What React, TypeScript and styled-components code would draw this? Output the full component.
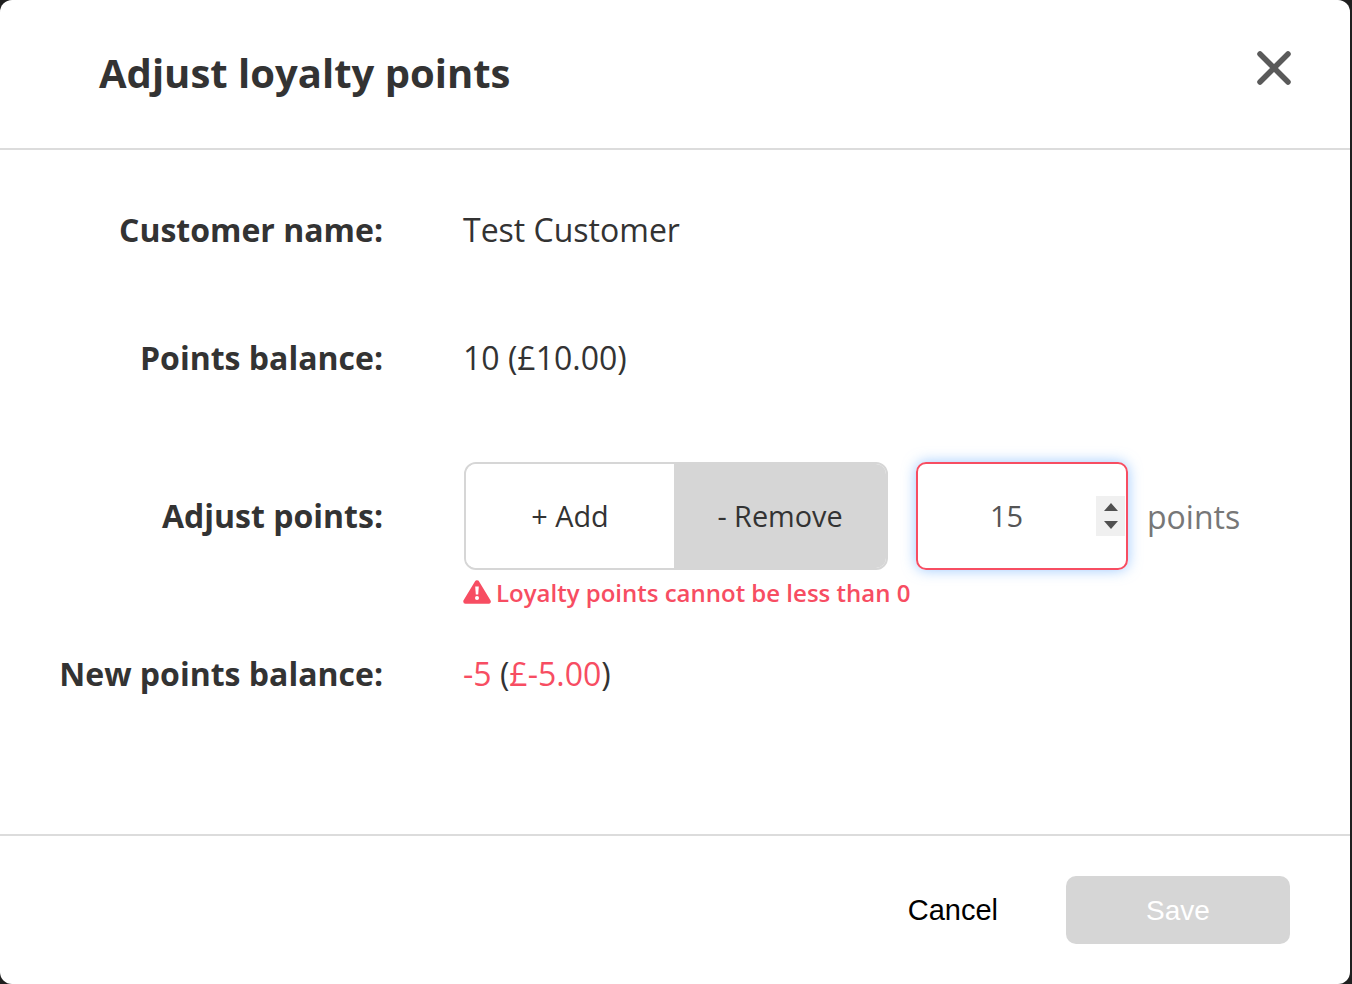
import React from "react";
import styled, { createGlobalStyle } from "styled-components";

const Global = createGlobalStyle`
  html, body {
    margin: 0;
    padding: 0;
    height: 984px;
    overflow: hidden;
    background: #1f1f1f;
    font-family: "Open Sans", "Liberation Sans", sans-serif;
  }
`;

const Modal = styled.div`
  width: 1350px;
  height: 984px;
  background: #fff;
  border-radius: 12px;
  display: flex;
  flex-direction: column;
  overflow: hidden;
`;

const Header = styled.header`
  height: 148px;
  border-bottom: 2px solid #dcdcdc;
  display: flex;
  justify-content: space-between;
  align-items: flex-start;
  padding: 0 58px 0 99px;
`;

const Title = styled.h1`
  margin: 45px 0 0;
  font-size: 40px;
  line-height: 56px;
  font-weight: 700;
  color: #333;
`;

const Close = styled.button`
  margin-top: 50px;
  padding: 0;
  width: 36px;
  height: 36px;
  border: none;
  background: none;
  display: flex;
`;

const Body = styled.main`
  flex: 1;
  display: flex;
  flex-direction: column;
  padding-top: 47px;
`;

const Row = styled.div<{ $height: number }>`
  height: ${(p) => p.$height}px;
  display: grid;
  grid-template-columns: 383px 1fr;
  column-gap: 80px;
  align-items: center;
`;

const Label = styled.div`
  text-align: right;
  font-size: 32px;
  font-weight: 700;
  color: #333;
  white-space: nowrap;
`;

const Value = styled.div`
  font-size: 32px;
  color: #333;
  white-space: nowrap;
`;

const Red = styled.span`
  color: #f74d62;
`;

const Controls = styled.div`
  display: flex;
  align-items: center;
  padding-top: 2px;
`;

const Toggle = styled.div`
  width: 424px;
  height: 108px;
  margin-left: 1px;
  box-sizing: border-box;
  border: 2px solid #d6d6d6;
  border-radius: 12px;
  display: flex;
  overflow: hidden;
`;

const ToggleOption = styled.div<{ $active?: boolean }>`
  flex: ${(p) => (p.$active ? "0 0 212px" : "1")};
  display: flex;
  align-items: center;
  justify-content: center;
  padding-bottom: 2px;
  font-size: 28.8px;
  font-weight: 500;
  color: #333;
  background: ${(p) => (p.$active ? "#d6d6d6" : "#fff")};
`;

const InputBox = styled.div`
  position: relative;
  width: 212px;
  height: 108px;
  margin-left: 28px;
  box-sizing: border-box;
  border: 2px solid #f74d62;
  border-radius: 10px;
  box-shadow: 0 0 14px rgba(90, 165, 255, 0.6);
  display: flex;
  align-items: center;
  padding: 0 0 2px 72px;
  font-size: 29px;
  color: #555;
`;

const Spinner = styled.div`
  position: absolute;
  top: 32px;
  right: 1px;
  width: 29px;
  height: 40px;
  background: #f0f0f0;
  display: flex;
  align-items: center;
  justify-content: center;
`;

const Unit = styled.span`
  margin-left: 19px;
  font-size: 32px;
  color: #777;
`;

const ErrorLine = styled.div`
  margin-left: 463px;
  height: 30px;
  display: flex;
  align-items: center;
  gap: 5px;
  font-size: 24px;
  font-weight: 600;
  color: #f74d62;
  white-space: nowrap;
`;

const Footer = styled.footer`
  height: 148px;
  border-top: 2px solid #dcdcdc;
  display: flex;
  align-items: center;
  justify-content: flex-end;
  padding: 0 60px 0 0;
`;

const Cancel = styled.button`
  padding: 1px 0 0;
  border: none;
  background: none;
  font-family: "Liberation Sans", Arial, sans-serif;
  font-size: 29px;
  color: #000;
`;

const Save = styled.button`
  width: 224px;
  height: 68px;
  margin-left: 68px;
  padding: 1px 0 0;
  border: none;
  border-radius: 10px;
  background: #d6d6d6;
  font-family: "Liberation Sans", Arial, sans-serif;
  font-size: 28px;
  color: #fff;
`;

export default function App() {
  return (
    <>
      <Global />
      <Modal>
        <Header>
          <Title>Adjust loyalty points</Title>
          <Close aria-label="Close">
            <svg width="36" height="36" viewBox="0 0 36 36" fill="none">
              <path d="M4 4L32 32M32 4L4 32" stroke="#5a5a5a" strokeWidth="5.5" strokeLinecap="round" />
            </svg>
          </Close>
        </Header>
        <Body>
          <Row $height={64}>
            <Label>Customer name:</Label>
            <Value>Test Customer</Value>
          </Row>
          <Row $height={192}>
            <Label>Points balance:</Label>
            <Value>10 (£10.00)</Value>
          </Row>
          <Row $height={124}>
            <Label>Adjust points:</Label>
            <Controls>
              <Toggle>
                <ToggleOption>+ Add</ToggleOption>
                <ToggleOption $active>- Remove</ToggleOption>
              </Toggle>
              <InputBox>
                15
                <Spinner>
                  <svg width="16" height="28" viewBox="0 0 16 28">
                    <path d="M8 1L15 9H1Z M1 19H15L8 27Z" fill="#505050" />
                  </svg>
                </Spinner>
              </InputBox>
              <Unit>points</Unit>
            </Controls>
          </Row>
          <ErrorLine>
            <svg width="28" height="24" viewBox="0 0 28 24">
              <path d="M14 2.5L25.5 21.5H2.5Z" fill="#f74d62" stroke="#f74d62" strokeWidth="4.5" strokeLinejoin="round" />
              <path d="M12.2 6.5H15.8L15.2 14.5H12.8Z" fill="#fff" />
              <circle cx="14" cy="18" r="2" fill="#fff" />
            </svg>
            Loyalty points cannot be less than 0
          </ErrorLine>
          <Row $height={132}>
            <Label>New points balance:</Label>
            <Value>
              <Red>-5</Red> (<Red>£-5.00</Red>)
            </Value>
          </Row>
        </Body>
        <Footer>
          <Cancel>Cancel</Cancel>
          <Save>Save</Save>
        </Footer>
      </Modal>
    </>
  );
}
